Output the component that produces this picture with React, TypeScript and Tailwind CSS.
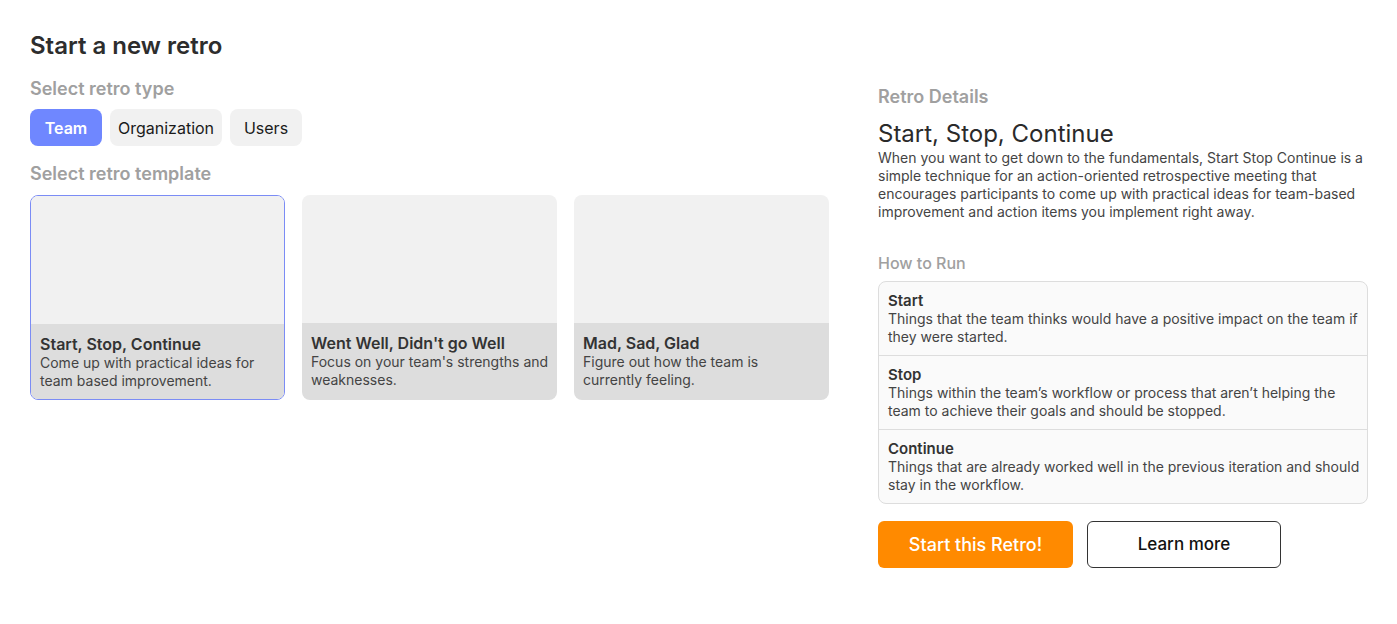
import React from "react";

const templates = [
  { title: "Start, Stop, Continue", lines: ["Come up with practical ideas for", "team based improvement."], selected: true },
  { title: "Went Well, Didn't go Well", lines: ["Focus on your team's strengths and", "weaknesses."], selected: false },
  { title: "Mad, Sad, Glad", lines: ["Figure out how the team is", "currently feeling."], selected: false },
];

const steps = [
  { title: "Start", lines: ["Things that the team thinks would have a positive impact on the team if", "they were started."] },
  { title: "Stop", lines: ["Things within the team\u2019s workflow or process that aren\u2019t helping the", "team to achieve their goals and should be stopped."] },
  { title: "Continue", lines: ["Things that are already worked well in the previous iteration and should", "stay in the workflow."] },
];

export default function App() {
  return (
    <div className="min-h-[624px] bg-white text-[#333] flex gap-[49px] pl-[30px] pt-[30px]" style={{ fontFamily: "Inter, 'Noto Sans', sans-serif" }}>
      <div className="w-[799px] flex flex-col">
        <h1 className="text-[24px] leading-[32px] font-semibold text-[#2d2d2d]">Start a new retro</h1>
        <h2 className="mt-[16px] text-[18px] leading-[22px] font-semibold text-[#a0a0a0]">Select retro type</h2>
        <div className="mt-[9px] flex gap-[8px]">
          <button className="h-[37px] w-[72px] rounded-[8px] bg-[#6f87ff] text-white text-[16px] font-semibold">Team</button>
          <button className="h-[37px] w-[112px] rounded-[8px] bg-[#f1f1f1] text-[#1a1a1a] text-[16px]">Organization</button>
          <button className="h-[37px] w-[72px] rounded-[8px] bg-[#f1f1f1] text-[#1a1a1a] text-[16px]">Users</button>
        </div>
        <h2 className="mt-[17px] text-[18px] leading-[22px] font-semibold text-[#a0a0a0]">Select retro template</h2>
        <div className="mt-[10px] flex gap-[17px]">
          {templates.map((t) => (
            <div
              key={t.title}
              className={
                "w-[256px] h-[205px] rounded-[8px] overflow-hidden flex flex-col " +
                (t.selected ? "border border-[#7b8cf5]" : "")
              }
            >
              <div className="h-[128px] bg-[#f1f1f1] shrink-0" />
              <div className="flex-1 bg-[#dddddd] px-[9px] pt-[10px] whitespace-nowrap">
                <div className="text-[16px] leading-[20px] font-semibold text-[#333]">{t.title}</div>
                {t.lines.map((l) => (
                  <div key={l} className="text-[14px] leading-[18px] text-[#444]">{l}</div>
                ))}
              </div>
            </div>
          ))}
        </div>
      </div>
      <div className="w-[490px] flex flex-col pt-[56px]">
        <h2 className="text-[18px] leading-[22px] font-semibold text-[#a0a0a0]">Retro Details</h2>
        <h3 className="mt-[13px] text-[24px] leading-[26px] text-[#2a2a2a]">Start, Stop, Continue</h3>
        <p className="mt-[2px] text-[14px] leading-[18px] text-[#444]">
          When you want to get down to the fundamentals, Start Stop Continue is a simple technique for an action-oriented retrospective meeting that encourages participants to come up with practical ideas for team-based improvement and action items you implement right away.
        </p>
        <h4 className="mt-[32px] text-[16px] leading-[20px] font-medium text-[#a0a0a0]">How to Run</h4>
        <div className="mt-[8px] border border-[#dddddd] rounded-[8px] bg-[#fafafa]">
          {steps.map((s, i) => (
            <div
              key={s.title}
              className={
                "px-[9px] whitespace-nowrap " +
                (i > 0 ? "h-[74px] pt-[10px] border-t border-[#dddddd]" : "h-[73px] pt-[10px]")
              }
            >
              <div className="text-[15px] leading-[18px] font-semibold text-[#333]">{s.title}</div>
              {s.lines.map((l) => (
                <div key={l} className="text-[14px] leading-[18px] text-[#444]">{l}</div>
              ))}
            </div>
          ))}
        </div>
        <div className="mt-[17px] flex gap-[14px]">
          <button className="h-[47px] w-[195px] rounded-[6px] bg-[#ff8a00] text-white text-[18px] font-medium">Start this Retro!</button>
          <button className="h-[47px] w-[194px] rounded-[6px] border border-[#333] bg-white text-[#111] text-[17px] font-medium">Learn more</button>
        </div>
      </div>
    </div>
  );
}
